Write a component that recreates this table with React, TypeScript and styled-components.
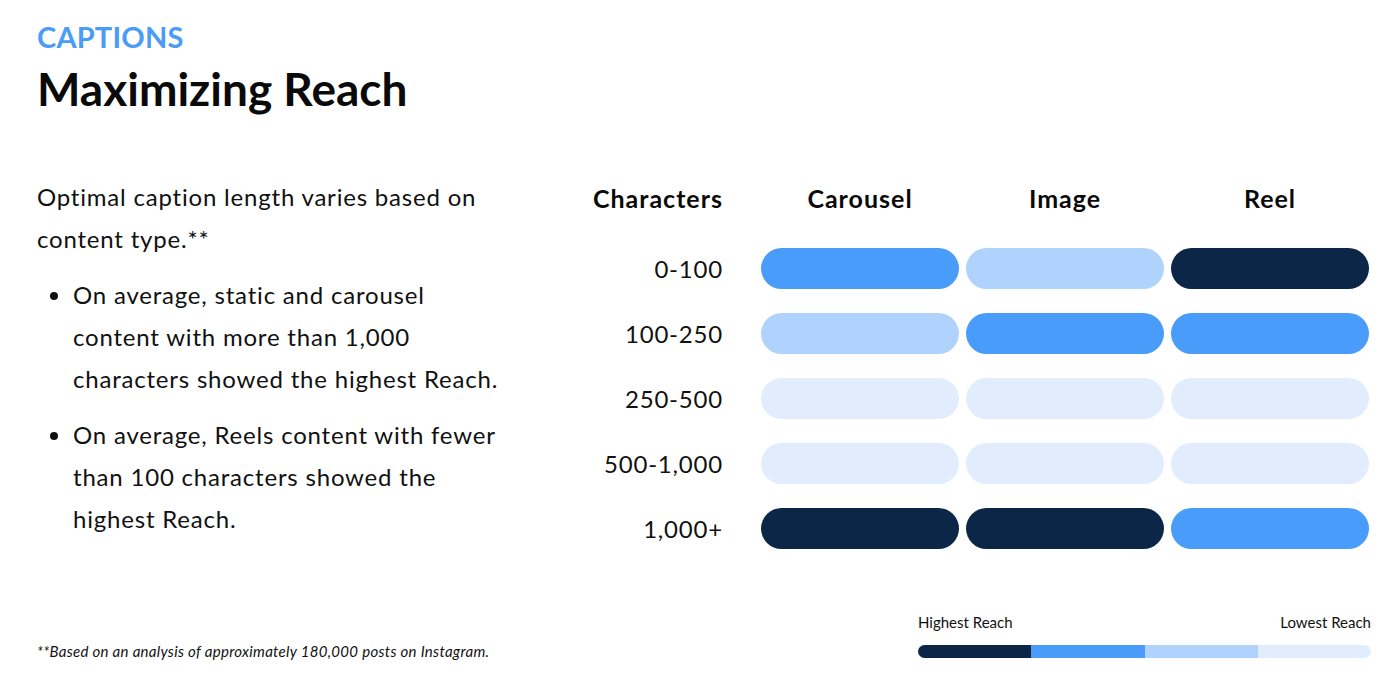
import React from "react";
import styled, { createGlobalStyle } from "styled-components";

type Level = 0 | 1 | 2 | 3;

const COLORS: Record<Level, string> = {
  0: "#0b2647",
  1: "#4a9cfb",
  2: "#afd3fc",
  3: "#e1edfd",
};

const COLUMNS = ["Carousel", "Image", "Reel"];

const ROWS: { label: string; levels: Level[] }[] = [
  { label: "0-100", levels: [1, 2, 0] },
  { label: "100-250", levels: [2, 1, 1] },
  { label: "250-500", levels: [3, 3, 3] },
  { label: "500-1,000", levels: [3, 3, 3] },
  { label: "1,000+", levels: [0, 0, 1] },
];

const GlobalStyle = createGlobalStyle`
  body {
    margin: 0;
    background: #ffffff;
    font-family: Lato, "Noto Sans", sans-serif;
    color: #111111;
  }
`;

const App = () => (
  <>
    <GlobalStyle />
    <Page>
      <Header>
        <Eyebrow>CAPTIONS</Eyebrow>
        <Title>Maximizing Reach</Title>
      </Header>

      <Content>
        <TextColumn>
          <Lead>Optimal caption length varies based on content type.**</Lead>
          <Bullets>
            <li>
              On average, static and carousel content with more than 1,000
              characters showed the highest Reach.
            </li>
            <li>
              On average, Reels content with fewer than 100 characters showed
              the highest Reach.
            </li>
          </Bullets>
        </TextColumn>

        <Chart>
          <HeadCell align="right">Characters</HeadCell>
          {COLUMNS.map((col) => (
            <HeadCell key={col}>{col}</HeadCell>
          ))}
          {ROWS.map((row) => (
            <React.Fragment key={row.label}>
              <RowLabel>{row.label}</RowLabel>
              {row.levels.map((level, i) => (
                <Pill key={i} level={level} />
              ))}
            </React.Fragment>
          ))}
        </Chart>
      </Content>

      <Footer>
        <Footnote>
          **Based on an analysis of approximately 180,000 posts on Instagram.
        </Footnote>
        <Legend>
          <LegendLabels>
            <span>Highest Reach</span>
            <span>Lowest Reach</span>
          </LegendLabels>
          <LegendBar>
            {([0, 1, 2, 3] as Level[]).map((level) => (
              <LegendSegment key={level} level={level} />
            ))}
          </LegendBar>
        </Legend>
      </Footer>
    </Page>
  </>
);

const Page = styled.div`
  box-sizing: border-box;
  display: flex;
  flex-direction: column;
  width: 1400px;
  height: 697px;
  padding: 22px 29px 0 37px;
`;

const Header = styled.header`
  display: flex;
  flex-direction: column;
`;

const Eyebrow = styled.div`
  font-size: 29px;
  font-weight: 700;
  line-height: 29px;
  color: #4a9cf6;
  letter-spacing: 0.2px;
`;

const Title = styled.h1`
  margin: 13px 0 0;
  font-size: 46px;
  font-weight: 700;
  line-height: 50px;
  letter-spacing: 0;
  color: #0a0a0a;
`;

const Content = styled.div`
  display: flex;
  justify-content: space-between;
  align-items: flex-start;
  margin-top: 62px;
`;

const TextColumn = styled.div`
  width: 480px;
  font-size: 24px;
  line-height: 42px;
  letter-spacing: 0.8px;
`;

const Lead = styled.p`
  margin: 0 0 14px;
`;

const Bullets = styled.ul`
  margin: 0;
  padding-left: 36px;

  li {
    margin-bottom: 14px;
  }
`;

const Chart = styled.div`
  display: grid;
  grid-template-columns: 171px repeat(3, 198px);
  grid-template-rows: 52px repeat(5, 41px);
  column-gap: 7px;
  row-gap: 24px;
  margin: -4px 2px 0 0;
`;

const HeadCell = styled.div<{ align?: "right" }>`
  display: flex;
  align-items: center;
  justify-content: ${(p) => (p.align === "right" ? "flex-end" : "center")};
  padding-right: ${(p) => (p.align === "right" ? "31px" : "0")};
  font-size: 25px;
  font-weight: 700;
  letter-spacing: 1px;
  color: #0a0a0a;
`;

const RowLabel = styled.div`
  display: flex;
  align-items: center;
  justify-content: flex-end;
  padding-right: 31px;
  font-size: 24px;
  letter-spacing: 0.8px;
  color: #111111;
`;

const Pill = styled.div<{ level: Level }>`
  border-radius: 21px;
  background: ${(p) => COLORS[p.level]};
`;

const Footer = styled.footer`
  display: flex;
  justify-content: space-between;
  align-items: flex-end;
  margin-top: auto;
  padding-bottom: 39px;
`;

const Footnote = styled.div`
  margin-bottom: -1px;
  font-size: 15px;
  font-style: italic;
  line-height: 16px;
  letter-spacing: 0.3px;
  color: #111111;
`;

const Legend = styled.div`
  display: flex;
  flex-direction: column;
  width: 453px;
`;

const LegendLabels = styled.div`
  display: flex;
  justify-content: space-between;
  margin-bottom: 15px;
  font-size: 15px;
  line-height: 16px;
  color: #111111;
`;

const LegendBar = styled.div`
  display: flex;
  height: 13px;
  overflow: hidden;
  border-radius: 7px;
`;

const LegendSegment = styled.div<{ level: Level }>`
  flex: 1;
  background: ${(p) => COLORS[p.level]};
`;

export default App;
